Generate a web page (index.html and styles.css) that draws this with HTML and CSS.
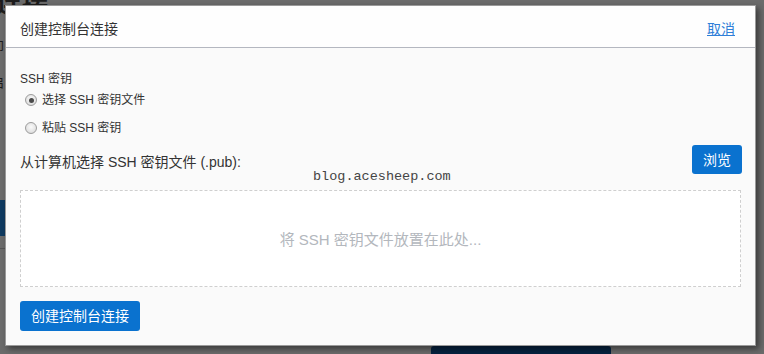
FILE: index.html
```
<!DOCTYPE html>
<html lang="zh-CN">
<head>
<meta charset="utf-8">
<title>创建控制台连接</title>
<link rel="stylesheet" href="styles.css">
</head>
<body>
<div class="page">
  <div class="bg-heading">连接</div>
  <div class="bg-text bg-text-1">印</div>
  <div class="bg-text bg-text-2">启</div>
  <div class="bg-band"></div>
  <div class="bg-line"></div>
  <div class="bg-button"></div>

  <div class="modal">
    <div class="modal-header">
      <span class="modal-title">创建控制台连接</span>
      <a class="cancel" href="#">取消</a>
    </div>
    <div class="modal-body">
      <div class="field-label">SSH 密钥</div>
      <label class="radio-row"><input type="radio" name="key" class="radio" checked><span>选择 SSH 密钥文件</span></label>
      <label class="radio-row second"><input type="radio" name="key" class="radio"><span>粘贴 SSH 密钥</span></label>
      <div class="file-row">
        <span class="file-label">从计算机选择 SSH 密钥文件 (.pub):</span>
        <button class="btn btn-browse">浏览</button>
      </div>
      <div class="dropzone">将 SSH 密钥文件放置在此处...</div>
      <button class="btn btn-create">创建控制台连接</button>
    </div>
    <div class="watermark">blog.acesheep.com</div>
  </div>
</div>
</body>
</html>
```
FILE: styles.css
```
* { box-sizing: border-box; }
html, body { margin: 0; padding: 0; }
body {
  width: 764px;
  height: 354px;
  overflow: hidden;
  background: #6b6b6b;
  font-family: "Liberation Sans", "Noto Sans CJK SC", sans-serif;
  color: #333;
}
.page {
  position: relative;
  width: 764px;
  height: 354px;
}
.bg-heading {
  position: absolute;
  left: -4px;
  top: -17px;
  font-size: 26px;
  font-weight: bold;
  color: #1c1c1c;
  font-family: "Noto Sans CJK SC", sans-serif;
}
.bg-text {
  position: absolute;
  left: -9px;
  font-size: 13px;
  color: #1c1c1c;
  font-family: "Noto Sans CJK SC", sans-serif;
}
.bg-text-1 { top: 36px; }
.bg-text-2 { top: 72px; }
.bg-band {
  position: absolute;
  left: 0;
  top: 200px;
  width: 8px;
  height: 36px;
  background: #0f3a60;
}
.bg-line {
  position: absolute;
  left: 0;
  top: 248px;
  width: 8px;
  height: 1px;
  background: #555;
}
.bg-button {
  position: absolute;
  left: 431px;
  top: 346px;
  width: 180px;
  height: 20px;
  border-radius: 3px;
  background: #06223f;
}
.modal {
  position: absolute;
  left: 5px;
  top: 5px;
  width: 751px;
  height: 341px;
  background: #fafafa;
  border: 1px solid #9a9a9a;
  box-shadow: 3px 3px 6px rgba(0, 0, 0, 0.45);
  display: flex;
  flex-direction: column;
}
.modal-header {
  height: 42px;
  flex: none;
  background: #fefefe;
  border-bottom: 1px solid #b4b7c0;
  display: flex;
  justify-content: space-between;
  align-items: flex-start;
  padding: 13px 20px 0 14px;
  font-size: 14px;
  line-height: 20px;
}
.modal-title { color: #333; }
.cancel {
  color: #2f7fd8;
  text-decoration: underline;
}
.modal-body {
  padding: 23px 14px 0 14px;
  display: flex;
  flex-direction: column;
  align-items: flex-start;
}
.field-label {
  font-size: 12px;
  line-height: 16px;
}
.radio-row {
  display: flex;
  align-items: center;
  font-size: 12px;
  line-height: 20px;
  height: 20px;
  margin-top: 3px;
}
.radio-row.second { margin-top: 8px; }
.radio {
  -webkit-appearance: none;
  appearance: none;
  width: 12px;
  height: 12px;
  margin: 0 5px 0 5px;
  border-radius: 50%;
  border: 1px solid #9c9c9c;
  background: radial-gradient(circle at 50% 40%, #fafafa 0%, #e4e4e4 60%, #cfcfcf 100%);
  position: relative;
  flex: none;
}
.radio:checked::after {
  content: "";
  position: absolute;
  left: 2.5px;
  top: 2.5px;
  width: 5px;
  height: 5px;
  border-radius: 50%;
  background: #4a4a4a;
}
.file-row {
  margin-top: 7px;
  width: 100%;
  display: flex;
  justify-content: space-between;
  align-items: flex-start;
}
.file-label {
  font-size: 14px;
  line-height: 20px;
  margin-top: 7px;
}
.btn {
  border: none;
  border-radius: 3px;
  background: #0a72cf;
  color: #fff;
  font-family: "Liberation Sans", "Noto Sans CJK SC", sans-serif;
  font-size: 14px;
  line-height: 20px;
  cursor: pointer;
}
.btn-browse {
  width: 50px;
  height: 29px;
  padding: 0;
  margin-right: -1px;
}
.dropzone {
  margin-top: 16px;
  width: 721px;
  height: 97px;
  background: #fff;
  border: 1px dashed #cfcfcf;
  display: flex;
  align-items: center;
  justify-content: center;
  font-size: 15px;
  color: #b3b7bd;
}
.btn-create {
  margin-top: 14px;
  width: 120px;
  height: 30px;
  padding: 0;
}
.watermark {
  position: absolute;
  left: 307px;
  top: 161px;
  font-family: "Liberation Mono", monospace;
  font-size: 13.5px;
  line-height: 20px;
  color: #444;
}
```
